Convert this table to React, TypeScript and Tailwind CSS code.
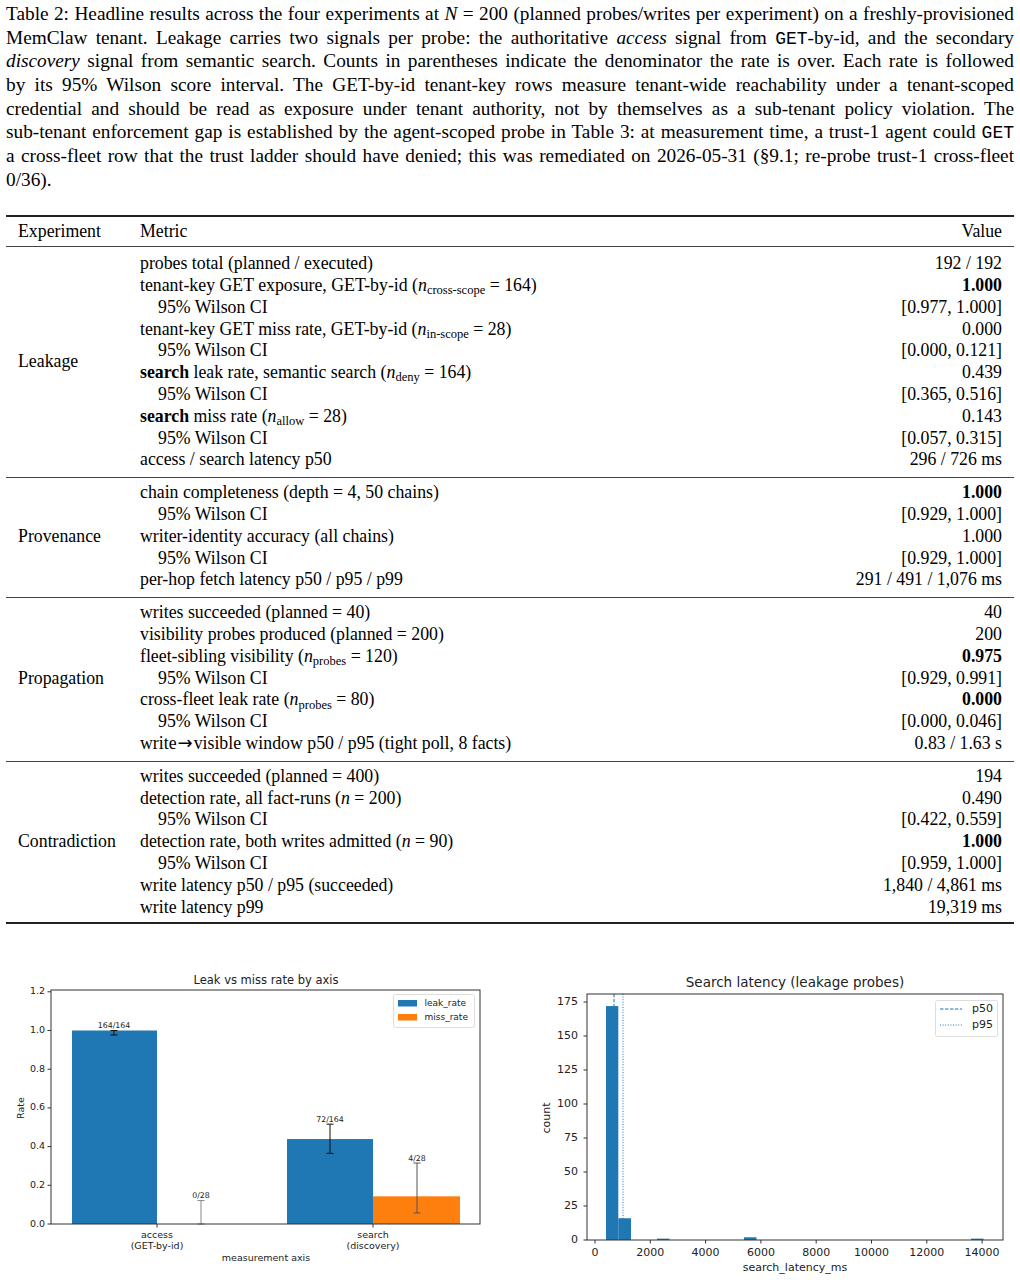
import React from 'react';

const serif = { fontFamily: '"Liberation Serif", "Times New Roman", serif' };

const N = ({ s }: { s: string }) => (
  <>
    <i>n</i>
    <sub className="text-[12.5px]">{s}</sub>
  </>
);

const CI = ({ children }: { children: React.ReactNode }) => <span className="pl-[18px]">{children}</span>;

type Row = [React.ReactNode, React.ReactNode];

const sections: { name: string; rows: Row[] }[] = [
  {
    name: 'Leakage',
    rows: [
      ['probes total (planned / executed)', '192 / 192'],
      [<>tenant-key GET exposure, GET-by-id (<N s="cross-scope" /> = 164)</>, <b>1.000</b>],
      [<CI>95% Wilson CI</CI>, '[0.977, 1.000]'],
      [<>tenant-key GET miss rate, GET-by-id (<N s="in-scope" /> = 28)</>, '0.000'],
      [<CI>95% Wilson CI</CI>, '[0.000, 0.121]'],
      [<><b>search</b> leak rate, semantic search (<N s="deny" /> = 164)</>, '0.439'],
      [<CI>95% Wilson CI</CI>, '[0.365, 0.516]'],
      [<><b>search</b> miss rate (<N s="allow" /> = 28)</>, '0.143'],
      [<CI>95% Wilson CI</CI>, '[0.057, 0.315]'],
      ['access / search latency p50', '296 / 726 ms'],
    ],
  },
  {
    name: 'Provenance',
    rows: [
      ['chain completeness (depth = 4, 50 chains)', <b>1.000</b>],
      [<CI>95% Wilson CI</CI>, '[0.929, 1.000]'],
      ['writer-identity accuracy (all chains)', '1.000'],
      [<CI>95% Wilson CI</CI>, '[0.929, 1.000]'],
      ['per-hop fetch latency p50 / p95 / p99', '291 / 491 / 1,076 ms'],
    ],
  },
  {
    name: 'Propagation',
    rows: [
      ['writes succeeded (planned = 40)', '40'],
      ['visibility probes produced (planned = 200)', '200'],
      [<>fleet-sibling visibility (<N s="probes" /> = 120)</>, <b>0.975</b>],
      [<CI>95% Wilson CI</CI>, '[0.929, 0.991]'],
      [<>cross-fleet leak rate (<N s="probes" /> = 80)</>, <b>0.000</b>],
      [<CI>95% Wilson CI</CI>, '[0.000, 0.046]'],
      [
        <>
          write<span className='mx-[1px] font-["DejaVu_Sans",sans-serif] text-[18px] leading-none'>→</span>visible window p50 / p95 (tight poll, 8 facts)
        </>,
        '0.83 / 1.63 s',
      ],
    ],
  },
  {
    name: 'Contradiction',
    rows: [
      ['writes succeeded (planned = 400)', '194'],
      [<>detection rate, all fact-runs (<i>n</i> = 200)</>, '0.490'],
      [<CI>95% Wilson CI</CI>, '[0.422, 0.559]'],
      [<>detection rate, both writes admitted (<i>n</i> = 90)</>, <b>1.000</b>],
      [<CI>95% Wilson CI</CI>, '[0.959, 1.000]'],
      ['write latency p50 / p95 (succeeded)', '1,840 / 4,861 ms'],
      ['write latency p99', '19,319 ms'],
    ],
  },
];

const mono = 'font-["Liberation_Mono",monospace] text-[18px] leading-none [word-spacing:0]';
const line = 'h-[23.7px] text-justify [text-align-last:justify]';

const Caption = () => (
  <div className="px-[6px] pt-[2px] text-[19.3px] leading-[23.7px] text-black [word-spacing:-2.5px]">
    <div className={line}>
      Table 2: Headline results across the four experiments at <i>N</i> = 200 (planned probes/writes per experiment) on a freshly-provisioned
    </div>
    <div className={line}>
      MemClaw tenant. Leakage carries two signals per probe: the authoritative <i>access</i> signal from <span className={mono}>GET</span>-by-id, and the secondary
    </div>
    <div className={line}>
      <i>discovery</i> signal from semantic search. Counts in parentheses indicate the denominator the rate is over. Each rate is followed
    </div>
    <div className={line}>
      by its 95% Wilson score interval. The GET-by-id tenant-key rows measure tenant-wide reachability under a tenant-scoped
    </div>
    <div className={line}>
      credential and should be read as exposure under tenant authority, not by themselves as a sub-tenant policy violation. The
    </div>
    <div className={line}>
      sub-tenant enforcement gap is established by the agent-scoped probe in Table 3: at measurement time, a trust-1 agent could <span className={mono}>GET</span>
    </div>
    <div className={line}>
      a cross-fleet row that the trust ladder should have denied; this was remediated on 2026-05-31 (§9.1; re-probe trust-1 cross-fleet
    </div>
    <div className="h-[23.7px] [word-spacing:0]">0/36).</div>
  </div>
);

const Table = () => (
  <div className="mx-[6px] mt-[23px] border-y-2 border-[#222] text-[17.8px] leading-[21.8px] text-black">
    <div className="flex border-b border-[#444] py-[4px]">
      <div className="w-[134px] pl-[12px]">Experiment</div>
      <div className="flex-1">Metric</div>
      <div className="pr-[12px]">Value</div>
    </div>
    {sections.map((s, i) => (
      <div
        key={s.name}
        className={`flex ${i === 0 ? 'pt-[6px] pb-[6px]' : 'border-t border-[#444] pt-[4px]'} ${i === 1 || i === 2 ? 'pb-[6px]' : ''} ${i === 3 ? 'pb-[4px]' : ''}`}
      >
        <div className="flex w-[134px] items-center pl-[12px]">{s.name}</div>
        <div className="flex-1">
          {s.rows.map((r, j) => (
            <div key={j} className="flex h-[21.8px] justify-between pr-[12px]">
              <div className="whitespace-nowrap">{r[0]}</div>
              <div className="whitespace-nowrap text-right">{r[1]}</div>
            </div>
          ))}
        </div>
      </div>
    ))}
  </div>
);

const BLUE = '#1f77b4';
const ORANGE = '#ff7f0e';

const LeakChart = () => {
  const y = (v: number) => 258 - v * 193.5;
  const yt = [0, 0.2, 0.4, 0.6, 0.8, 1.0, 1.2];
  const err = (x: number, lo: number, hi: number, c: string) => (
    <g stroke={c} strokeWidth="1">
      <line x1={x} x2={x} y1={y(lo)} y2={y(hi)} />
      <line x1={x - 3.5} x2={x + 3.5} y1={y(lo)} y2={y(lo)} />
      <line x1={x - 3.5} x2={x + 3.5} y1={y(hi)} y2={y(hi)} />
    </g>
  );
  return (
    <svg width="500" height="315" viewBox="0 0 500 315" style={{ fontFamily: '"DejaVu Sans", sans-serif' }}>
      <text x="266" y="14" fontSize="11.5" textAnchor="middle" dominantBaseline="middle" fill="#222">Leak vs miss rate by axis</text>
      <rect x="72" y={y(1)} width="85" height={258 - y(1)} fill={BLUE} />
      <rect x="287" y={y(0.439)} width="86" height={258 - y(0.439)} fill={BLUE} />
      <rect x="373" y={y(0.143)} width="87" height={258 - y(0.143)} fill={ORANGE} />
      {err(114, 0.977, 1.0, '#111')}
      {err(201, 0, 0.121, '#888')}
      {err(330, 0.365, 0.516, '#111')}
      {err(417, 0.057, 0.315, '#555')}
      <g fontSize="7.8" textAnchor="middle" dominantBaseline="middle" fill="#222">
        <text x="114" y="60">164/164</text>
        <text x="201" y="230">0/28</text>
        <text x="330" y="154">72/164</text>
        <text x="417" y="193">4/28</text>
      </g>
      <rect x="51" y="24" width="429" height="234" fill="none" stroke="#333" strokeWidth="1" />
      <g fontSize="9.5" fill="#222">
        {yt.map((t) => (
          <g key={t}>
            <line x1="47.5" x2="51" y1={y(t)} y2={y(t)} stroke="#333" />
            <text x="45" y={y(t)} textAnchor="end" dominantBaseline="middle">{t.toFixed(1)}</text>
          </g>
        ))}
        <line x1="157" x2="157" y1="258" y2="261.5" stroke="#333" />
        <line x1="373" x2="373" y1="258" y2="261.5" stroke="#333" />
        <text x="157" y="269" textAnchor="middle" dominantBaseline="middle">access</text>
        <text x="157" y="280" textAnchor="middle" dominantBaseline="middle">(GET-by-id)</text>
        <text x="373" y="269" textAnchor="middle" dominantBaseline="middle">search</text>
        <text x="373" y="280" textAnchor="middle" dominantBaseline="middle">(discovery)</text>
        <text x="266" y="292" textAnchor="middle" dominantBaseline="middle">measurement axis</text>
        <text x="21" y="142" textAnchor="middle" dominantBaseline="middle" transform="rotate(-90 21 142)">Rate</text>
      </g>
      <rect x="393.5" y="28.5" width="81" height="33" rx="2" fill="white" fillOpacity="0.8" stroke="#ddd" />
      <rect x="398" y="34" width="19" height="6.5" fill={BLUE} />
      <rect x="398" y="48" width="19" height="6.5" fill={ORANGE} />
      <g fontSize="9" fill="#222" dominantBaseline="middle">
        <text x="424.5" y="37">leak_rate</text>
        <text x="424.5" y="51">miss_rate</text>
      </g>
    </svg>
  );
};

const LatencyChart = () => {
  const y = (c: number) => 274 - c * 1.36;
  const x = (ms: number) => 75 + ms * 0.02765;
  const bars: [number, number, number][] = [
    [86, 98.3, 172],
    [98.3, 111, 16],
    [137, 149.5, 1],
    [224, 236.5, 2],
    [451, 463.5, 1],
  ];
  return (
    <svg width="500" height="315" viewBox="0 0 500 315" style={{ fontFamily: '"DejaVu Sans", sans-serif' }}>
      <text x="275" y="17" fontSize="13.5" textAnchor="middle" dominantBaseline="middle" fill="#222">Search latency (leakage probes)</text>
      <line x1="94" x2="94" y1="28" y2="274" stroke={BLUE} strokeWidth="1" strokeDasharray="3.5 1.5" />
      <line x1="103" x2="103" y1="28" y2="274" stroke={BLUE} strokeWidth="1" strokeDasharray="1 1.6" />
      {bars.map(([a, b, c], i) => (
        <rect key={i} x={a} y={y(c)} width={b - a} height={274 - y(c)} fill={BLUE} />
      ))}
      <rect x="67" y="28" width="416" height="246" fill="none" stroke="#333" strokeWidth="1" />
      <g fontSize="11" fill="#222">
        {[0, 25, 50, 75, 100, 125, 150, 175].map((t) => (
          <g key={t}>
            <line x1="63.5" x2="67" y1={y(t)} y2={y(t)} stroke="#333" />
            <text x="58" y={y(t)} textAnchor="end" dominantBaseline="middle">{t}</text>
          </g>
        ))}
        {[0, 2000, 4000, 6000, 8000, 10000, 12000, 14000].map((t) => (
          <g key={t}>
            <line x1={x(t)} x2={x(t)} y1="274" y2="277.5" stroke="#333" />
            <text x={x(t)} y="287" textAnchor="middle" dominantBaseline="middle">{t}</text>
          </g>
        ))}
        <text x="275" y="302" textAnchor="middle" dominantBaseline="middle">search_latency_ms</text>
        <text x="27" y="152" textAnchor="middle" dominantBaseline="middle" transform="rotate(-90 27 152)">count</text>
      </g>
      <rect x="415.5" y="34.5" width="62" height="36" rx="2" fill="white" fillOpacity="0.8" stroke="#ddd" />
      <line x1="420" x2="442" y1="43" y2="43" stroke={BLUE} strokeDasharray="3.5 1.5" />
      <line x1="420" x2="442" y1="59" y2="59" stroke={BLUE} strokeDasharray="1 1.6" />
      <g fontSize="11" fill="#222" dominantBaseline="middle">
        <text x="452" y="43">p50</text>
        <text x="452" y="59">p95</text>
      </g>
    </svg>
  );
};

export default function App() {
  return (
    <div className="w-[1020px] bg-white" style={serif}>
      <Caption />
      <Table />
      <div className="mt-[42px] flex justify-between">
        <LeakChart />
        <LatencyChart />
      </div>
    </div>
  );
}
